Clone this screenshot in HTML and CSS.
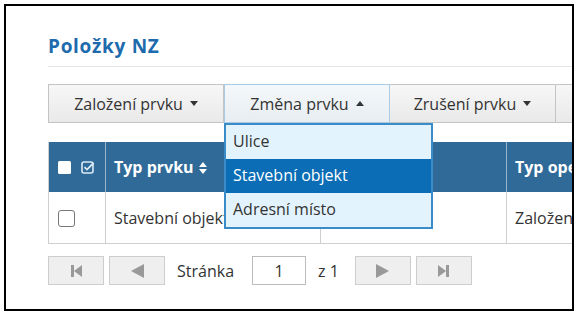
FILE: index.html
```html
<!DOCTYPE html>
<html lang="cs">
<head>
    <meta charset="UTF-8">
    <meta name="viewport" content="width=device-width, initial-scale=1.0">
    <title>Položky NZ</title>
    <link rel="stylesheet" href="styles.css">
</head>
<body>
    <div class="frame">
        <h2 class="title">Položky NZ</h2>

        <div class="toolbar">
            <div class="tool">
                <button class="tool-btn">Založení prvku <span class="caret down"></span></button>
            </div>
            <div class="tool open">
                <button class="tool-btn">Změna prvku <span class="caret up"></span></button>
                <ul class="menu">
                    <li>Ulice</li>
                    <li class="selected">Stavební objekt</li>
                    <li>Adresní místo</li>
                </ul>
            </div>
            <div class="tool">
                <button class="tool-btn">Zrušení prvku <span class="caret down"></span></button>
            </div>
            <div class="tool">
                <button class="tool-btn"></button>
            </div>
        </div>

        <table class="grid">
            <thead>
                <tr>
                    <th class="col-check">
                        <span class="head-icons">
                            <svg width="13" height="13" viewBox="0 0 13 13"><rect x="0" y="0" width="13" height="13" rx="1.5" fill="#fff"/></svg>
                            <svg width="14" height="13" viewBox="0 0 14 13"><rect x="1" y="1" width="11" height="11" rx="2" fill="none" stroke="#dbeaf6" stroke-width="1.6"/><path d="M3.5 6.2 L6 8.6 L12.5 2" fill="none" stroke="#dbeaf6" stroke-width="1.8"/></svg>
                        </span>
                    </th>
                    <th class="col-type">Typ prvku <svg class="sort" width="8" height="12" viewBox="0 0 8 12"><path d="M4 0 L8 5 H0 Z M0 7 H8 L4 12 Z" fill="#fff"/></svg></th>
                    <th class="col-name"></th>
                    <th class="col-op">Typ ope</th>
                </tr>
            </thead>
            <tbody>
                <tr>
                    <td class="col-check"><span class="box"></span></td>
                    <td>Stavební objekt</td>
                    <td></td>
                    <td>Založen</td>
                </tr>
            </tbody>
        </table>

        <div class="pager">
            <button class="pg-btn">
                <svg width="11" height="12" viewBox="0 0 11 12"><rect x="0" y="0" width="3" height="12" fill="#999"/><path d="M11 0 V12 L3 6 Z" fill="#999"/></svg>
            </button>
            <button class="pg-btn">
                <svg width="13" height="14" viewBox="0 0 13 14"><path d="M13 0 V14 L0 7 Z" fill="#999"/></svg>
            </button>
            <span class="pg-label">Stránka</span>
            <input class="pg-input" type="text" value="1">
            <span class="pg-label">z 1</span>
            <button class="pg-btn next">
                <svg width="13" height="14" viewBox="0 0 13 14"><path d="M0 0 V14 L13 7 Z" fill="#999"/></svg>
            </button>
            <button class="pg-btn">
                <svg width="11" height="12" viewBox="0 0 11 12"><path d="M0 0 V12 L8 6 Z" fill="#999"/><rect x="8" y="0" width="3" height="12" fill="#999"/></svg>
            </button>
        </div>
    </div>
</body>
</html>
```

FILE: styles.css
```css
body {
    margin: 0;
    font-family: "Open Sans", "Noto Sans", sans-serif;
    color: #333;
    background: #fff;
}
.frame {
    margin: 4px;
    width: 570px;
    height: 307px;
    border: 2px solid #000;
    overflow: hidden;
    padding-left: 42px;
    box-sizing: border-box;
}
.title {
    margin: 28px 0 0 0;
    padding-bottom: 8px;
    font-size: 19px;
    line-height: 24px;
    font-weight: 700;
    letter-spacing: 0.7px;
    color: #1d6bad;
    border-bottom: 1px solid #e6e6e6;
}
.toolbar {
    display: flex;
    margin-top: 17px;
    width: 700px;
}
.tool {
    position: relative;
    flex-shrink: 0;
}
.tool-btn {
    display: flex;
    align-items: center;
    justify-content: center;
    gap: 7px;
    width: 166px;
    height: 39px;
    padding: 0;
    font-family: inherit;
    font-size: 16px;
    color: #333;
    background: linear-gradient(#f7f7f7, #e9e9e9);
    border: 1px solid #c4c4c4;
    border-left: none;
}
.tool:first-child .tool-btn {
    width: 176px;
    border-left: 1px solid #c4c4c4;
}
.tool.open .tool-btn {
    background: linear-gradient(#f4f8fb, #e8edf1);
    border: 1px solid #a9cbe6;
}
.caret {
    width: 0;
    height: 0;
    border-left: 4px solid transparent;
    border-right: 4px solid transparent;
}
.caret.down {
    border-top: 5px solid #333;
}
.caret.up {
    border-bottom: 5px solid #333;
}
.menu {
    position: absolute;
    left: 0;
    top: 39px;
    width: 205px;
    margin: 0;
    padding: 0;
    list-style: none;
    background: #e3f3fd;
    border: 2px solid #3b8bc9;
    z-index: 2;
}
.menu li {
    height: 34px;
    line-height: 33px;
    padding-left: 7px;
    font-size: 16px;
    color: #333;
}
.menu li.selected {
    background: #0a6db5;
    color: #fff;
}
.grid {
    margin-top: 19px;
    border-collapse: collapse;
    width: 700px;
    font-size: 16px;
    table-layout: fixed;
}
.grid th {
    height: 50px;
    background: #2f6a98;
    color: #fff;
    font-weight: 700;
    text-align: left;
    padding: 0 8px;
    border: 1px solid #9bb3c8;
    border-top: none;
    border-bottom: none;
}
.grid td {
    height: 51px;
    padding: 0 8px;
    border: 1px solid #cfcfcf;
    border-top: none;
    white-space: nowrap;
}
.grid th:first-child, .grid td:first-child {
    border-left: 1px solid #cfcfcf;
}
.col-check {
    width: 40px;
}
.col-type {
    width: 198px;
}
.col-name {
    width: 169px;
}
.head-icons {
    display: flex;
    align-items: center;
    gap: 10px;
    padding-left: 1px;
}
.head-icons svg {
    display: block;
}
.sort {
    vertical-align: -1px;
    margin-left: 1px;
}
.box {
    display: block;
    width: 15px;
    height: 15px;
    border: 1px solid #777;
    border-radius: 3px;
    margin-left: 1px;
    margin-top: 1px;
}
.pager {
    display: flex;
    align-items: center;
    margin-top: 12px;
}
.pg-btn {
    display: flex;
    align-items: center;
    justify-content: center;
    width: 56px;
    height: 29px;
    padding: 0;
    background: #efefef;
    border: 1px solid #cdcdcd;
    margin-right: 5px;
}
.pg-btn.next {
    margin-left: 16px;
}
.pg-label {
    font-size: 16px;
    margin-left: 7px;
}
.pg-input {
    width: 54px;
    height: 29px;
    box-sizing: border-box;
    margin-left: 18px;
    border: 1px solid #bbb;
    font-family: inherit;
    font-size: 16px;
    text-align: center;
    padding: 0;
    color: #333;
}
.pg-input + .pg-label {
    margin-left: 12px;
}
```
